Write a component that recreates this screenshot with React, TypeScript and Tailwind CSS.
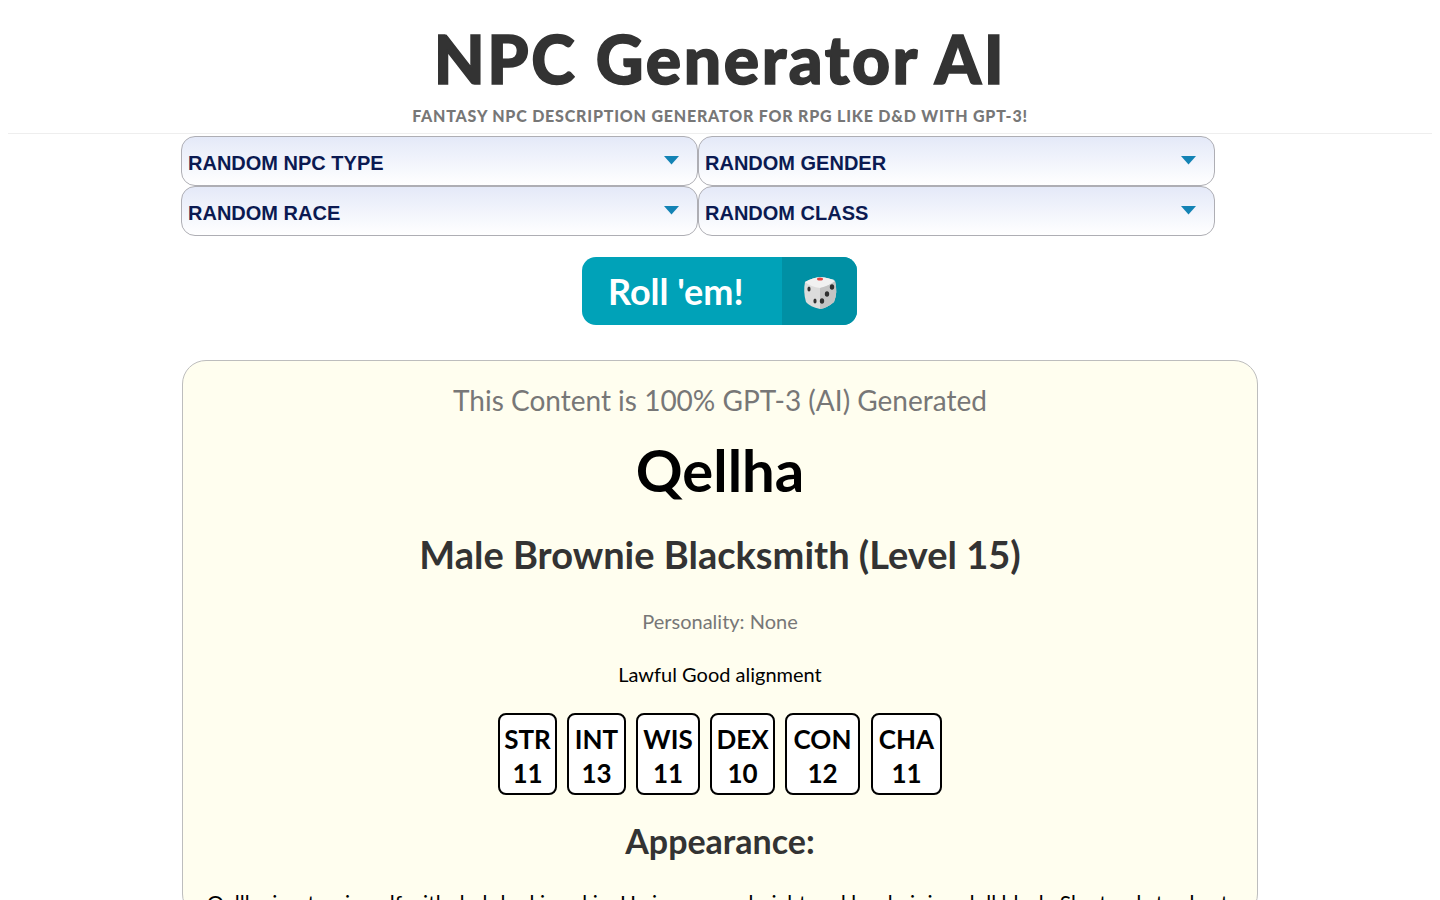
const stats = [
  { k: "STR", v: "11", w: "w-[59px]" },
  { k: "INT", v: "13", w: "w-[59px]" },
  { k: "WIS", v: "11", w: "w-[64px]" },
  { k: "DEX", v: "10", w: "w-[65px]" },
  { k: "CON", v: "12", w: "w-[75px]" },
  { k: "CHA", v: "11", w: "w-[71px] ml-[1px]" },
];

function Select({ label }: { label: string }) {
  return (
    <div className="flex h-[50px] w-[517px] items-center justify-between rounded-[14px] border border-[#aeaeb4] bg-gradient-to-b from-[#e4e9f8] to-white pl-[6px] pr-[18px]">
      <span className="pt-[3px] font-['Liberation_Sans',sans-serif] text-[20px] font-bold text-[#0b1a52]">{label}</span>
      <svg width="15" height="9" viewBox="0 0 15 9" className="mb-[2px]">
        <path d="M0 0H15L7.5 8.5Z" fill="#1383b5" />
      </svg>
    </div>
  );
}

function Dice() {
  return (
    <svg width="38" height="38" viewBox="0 0 38 38">
      <path d="M4 10 Q19 1 34 9 Q37 20 33 30 Q26 36 19 37 Q9 35 5 30 Q2 20 4 10Z" fill="#dcdcdc" />
      <path d="M4 10 Q19 1 34 9 Q28 14 19 16 Q10 15 4 10Z" fill="#f1f1f1" />
      <path d="M19 16 Q28 14 34 9 Q37 20 33 30 Q26 36 19 37Z" fill="#c4c4c4" />
      <ellipse cx="19" cy="7" rx="3" ry="1.5" fill="#e2433f" />
      <ellipse cx="8" cy="17" rx="1.6" ry="2.6" fill="#333" />
      <ellipse cx="14" cy="29" rx="1.6" ry="2.6" fill="#333" />
      <ellipse cx="31" cy="15" rx="2.2" ry="2.8" fill="#2f2f2f" />
      <ellipse cx="26" cy="22" rx="2.2" ry="2.8" fill="#2f2f2f" />
      <ellipse cx="21" cy="29" rx="2.2" ry="2.8" fill="#2f2f2f" />
    </svg>
  );
}

export default function App() {
  return (
    <div className="h-[900px] overflow-hidden bg-white font-['Lato',sans-serif]">
      <header className="mx-2 flex h-[134px] flex-col items-center border-b border-[#eeeeee]">
        <h1 className="mt-[20px] h-[78px] text-[66px] leading-[78px] font-black tracking-[2.6px] text-[#333333] [-webkit-text-stroke:1.5px_#333333]">NPC Generator AI</h1>
        <p className="mt-[8px] text-[16px] leading-[20px] font-black tracking-[0.8px] text-[#777777] uppercase">Fantasy NPC description generator for RPG like D&amp;D with GPT-3!</p>
      </header>
      <div className="mt-[2px] ml-[181px] grid w-[1034px] grid-cols-2">
        <Select label="RANDOM NPC TYPE" />
        <Select label="RANDOM GENDER" />
        <Select label="RANDOM RACE" />
        <Select label="RANDOM CLASS" />
      </div>
      <div className="mt-[21px] flex justify-center">
        <button className="mr-[1px] flex h-[68px] w-[275px] overflow-hidden rounded-[14px] bg-[#00a2b8] text-white">
          <span className="flex h-full w-[200px] items-center pl-[26px] text-[36px] font-bold">Roll 'em!</span>
          <span className="flex h-full w-[75px] items-center justify-center bg-[#0090a4]"><Dice /></span>
        </button>
      </div>
      <main className="mt-[35px] ml-[182px] flex w-[1076px] flex-col items-center rounded-[24px] border border-[#bdbdbd] bg-[#fffeef] pt-[19px]">
        <p className="text-[28px] leading-[40px] text-[#777777]">This Content is 100% GPT-3 (AI) Generated</p>
        <h2 className="mt-[15px] text-[58px] leading-[70px] font-bold text-black">Qellha</h2>
        <h3 className="mt-[26px] text-[38px] leading-[46px] font-bold text-[#333333]">Male Brownie Blacksmith (Level 15)</h3>
        <p className="mt-[30px] text-[20px] leading-[28px] text-[#777777]">Personality: None</p>
        <p className="mt-[25px] text-[20px] leading-[28px] text-black">Lawful Good alignment</p>
        <div className="mt-[25px] flex gap-[10px]">
          {stats.map((s) => (
            <div key={s.k} className={`flex h-[82px] ${s.w} flex-col items-center rounded-[8px] border-2 border-black bg-white pt-[7px] text-[26px] leading-[34px] font-bold text-black`}>
              <span>{s.k}</span>
              <span>{s.v}</span>
            </div>
          ))}
        </div>
        <h4 className="mt-[23px] text-[34px] leading-[46px] font-bold text-[#333333]">Appearance:</h4>
        <p className="mt-[25px] w-full pl-[24px] text-left text-[21px] leading-[28px] whitespace-nowrap text-black">Qellha is a tan-in-self with dark-looking skin. He is average height and has hair is a dull black. She tends to short</p>
      </main>
    </div>
  );
}
